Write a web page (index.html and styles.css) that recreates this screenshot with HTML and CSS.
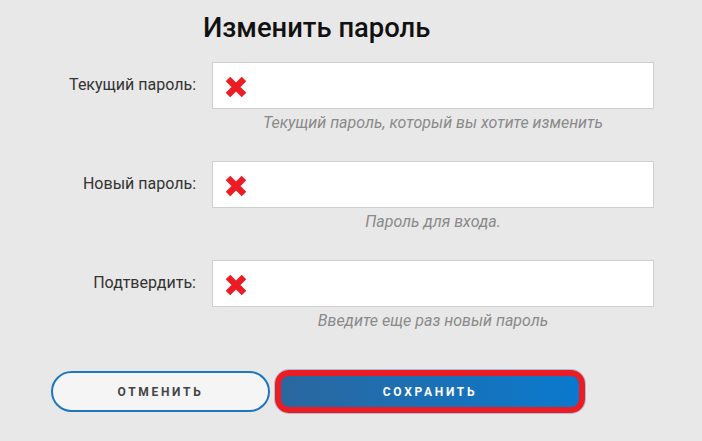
FILE: index.html
```html
<!DOCTYPE html>
<html lang="ru">
<head>
<meta charset="utf-8">
<title>Изменить пароль</title>
<link rel="stylesheet" href="styles.css">
</head>
<body>
<div class="page">
  <h1 class="title">Изменить пароль</h1>
  <form class="form">
    <div class="row">
      <label class="label">Текущий пароль:</label>
      <div class="field">
        <div class="input">
          <svg class="xicon" viewBox="0 0 24 24" width="24" height="24"><path d="M4 4 L20 20 M20 4 L4 20" stroke="#ed1c24" stroke-width="6.4" fill="none"/></svg>
        </div>
        <div class="help">Текущий пароль, который вы хотите изменить</div>
      </div>
    </div>
    <div class="row">
      <label class="label">Новый пароль:</label>
      <div class="field">
        <div class="input">
          <svg class="xicon" viewBox="0 0 24 24" width="24" height="24"><path d="M4 4 L20 20 M20 4 L4 20" stroke="#ed1c24" stroke-width="6.4" fill="none"/></svg>
        </div>
        <div class="help">Пароль для входа.</div>
      </div>
    </div>
    <div class="row">
      <label class="label">Подтвердить:</label>
      <div class="field">
        <div class="input">
          <svg class="xicon" viewBox="0 0 24 24" width="24" height="24"><path d="M4 4 L20 20 M20 4 L4 20" stroke="#ed1c24" stroke-width="6.4" fill="none"/></svg>
        </div>
        <div class="help">Введите еще раз новый пароль</div>
      </div>
    </div>
    <div class="buttons">
      <button type="button" class="btn btn-cancel">ОТМЕНИТЬ</button>
      <button type="button" class="btn btn-save">СОХРАНИТЬ</button>
    </div>
  </form>
</div>
</body>
</html>
```

FILE: styles.css
```css
html, body {
  margin: 0;
  padding: 0;
  background: #e8e8e8;
  font-family: Roboto, "Liberation Sans", sans-serif;
}

.page {
  width: 702px;
  height: 441px;
  overflow: hidden;
}

.title {
  margin: 12px 0 0 203px;
  font-size: 27.4px;
  line-height: 32px;
  font-weight: 500;
  color: #111;
}

.form {
  margin-top: 18px;
}

.row {
  display: grid;
  grid-template-columns: 212px 442px;
  margin-bottom: 28px;
}

.label {
  padding-right: 16px;
  text-align: right;
  font-size: 16px;
  color: #333;
  height: 47px;
  line-height: 45px;
}

.input {
  box-sizing: border-box;
  height: 47px;
  background: #fff;
  border: 1px solid #cfcfcf;
  display: flex;
  align-items: center;
  padding-left: 11px;
}

.xicon {
  display: block;
  margin-top: 2px;
}

.help {
  margin-top: 4px;
  text-align: center;
  font-size: 16px;
  line-height: 20px;
  font-style: italic;
  color: #8a8a8a;
}

.buttons {
  display: flex;
  align-items: center;
  gap: 5px;
  margin: 39px 0 0 51px;
}

.btn {
  font-family: Roboto, "Liberation Sans", sans-serif;
  font-size: 12px;
  font-weight: 700;
  letter-spacing: 2.7px;
  cursor: pointer;
}

.btn-cancel {
  box-sizing: border-box;
  width: 219px;
  height: 41px;
  border: 2px solid #1b77c0;
  border-radius: 21px;
  background: #f5f5f5;
  color: #444;
}

.btn-save {
  box-sizing: border-box;
  width: 310px;
  height: 43px;
  border: 6px solid #ec1c24;
  border-radius: 14px;
  background: linear-gradient(to right, #2b679f, #0a79cd);
  color: #fff;
  box-shadow: 0 0 0 1px rgba(40, 120, 190, 0.35);
}
```
